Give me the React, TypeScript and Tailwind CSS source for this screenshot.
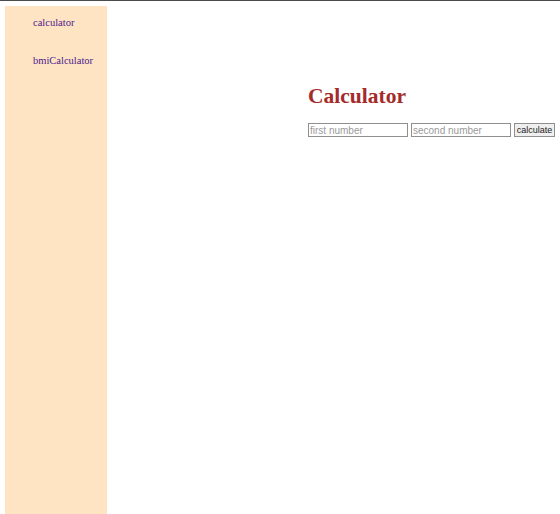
import React from 'react';

const App: React.FC = () => {
  return (
    <div className="min-h-screen bg-white border-t border-[#4a4a4a] overflow-hidden">
      <div className="flex">
        {/* Sidebar */}
        <nav className="ml-[5px] mt-[5px] w-[102px] h-[520px] bg-[#ffe4c4] shrink-0 pt-[11px] pl-[28px] flex flex-col gap-[26px] font-['Liberation_Serif',serif] text-[10.5px] text-[#4b1a8b]">
          <a className="leading-[12px]">calculator</a>
          <a className="leading-[12px]">bmiCalculator</a>
        </nav>

        <main className="pl-[201px] pt-[81px] shrink-0">
          <h1 className="font-['Liberation_Serif',serif] font-bold text-[21.5px] leading-[28px] text-[#a52a2a]">
            Calculator
          </h1>
          <div className="mt-[13px] flex gap-[3px] font-['Liberation_Sans',sans-serif] text-[10px]">
            <input
              placeholder="first number"
              className="w-[100px] h-[14px] border border-[#8f8f8f] px-[1px] leading-[12px] placeholder:text-[#9a9a9a] outline-none"
            />
            <input
              placeholder="second number"
              className="w-[100px] h-[14px] border border-[#8f8f8f] px-[1px] leading-[12px] placeholder:text-[#9a9a9a] outline-none"
            />
            <button className="w-[41px] h-[14px] overflow-hidden whitespace-nowrap border border-[#8f8f8f] bg-[#efefef] text-[#222] text-[9px] leading-[12px] text-center px-0">
              calculate
            </button>
          </div>
        </main>
      </div>
    </div>
  );
};

export default App;
